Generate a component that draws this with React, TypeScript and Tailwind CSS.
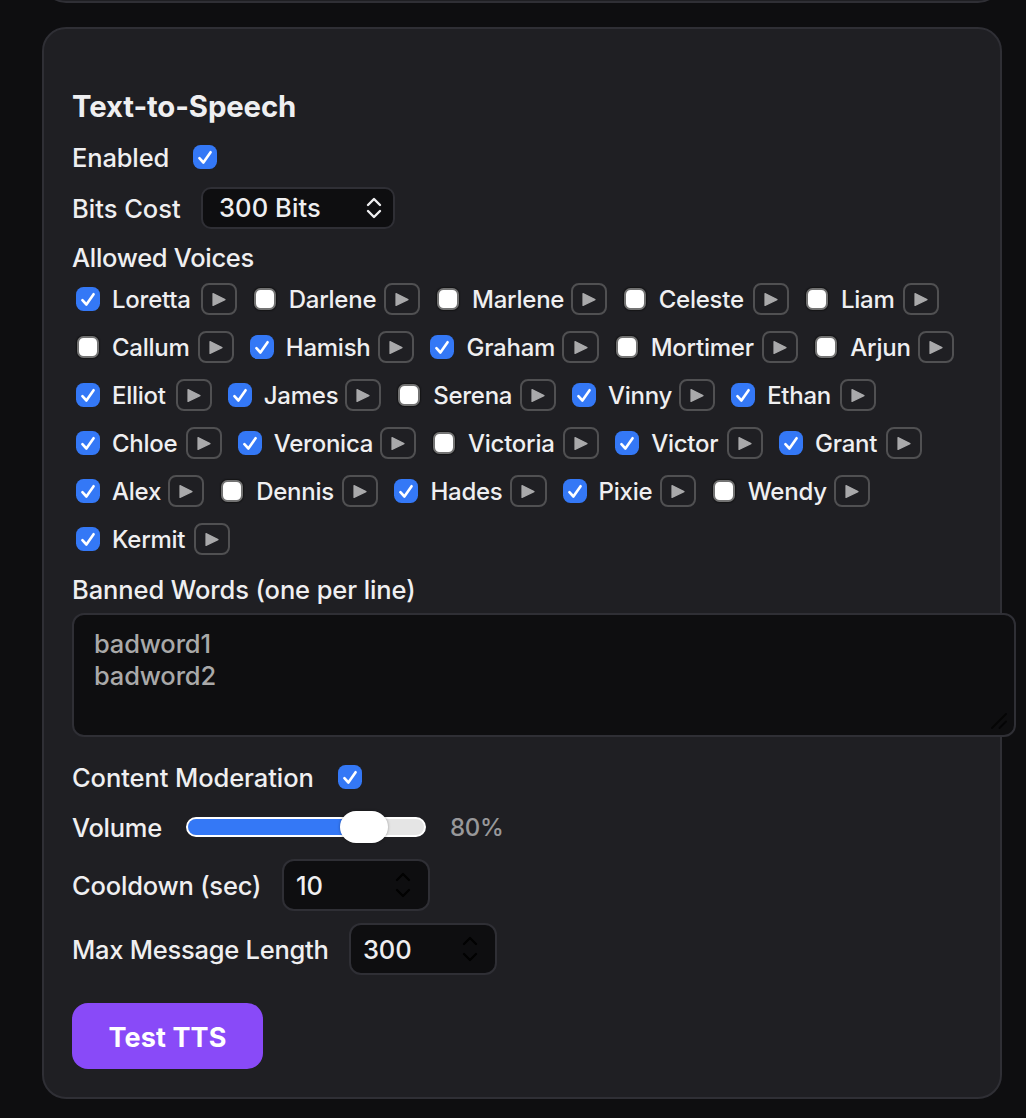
import React, { useState } from "react";
import clsx from "clsx";

interface Voice {
  name: string;
  enabled: boolean;
  width: string;
}

const initialVoices: Voice[] = [
  { name: "Loretta", enabled: true, width: "w-[80.5px]" },
  { name: "Darlene", enabled: false, width: "w-[87.2px]" },
  { name: "Marlene", enabled: false, width: "w-[90.5px]" },
  { name: "Celeste", enabled: false, width: "w-[86px]" },
  { name: "Liam", enabled: false, width: "w-[54px]" },
  { name: "Callum", enabled: false, width: "w-[77.6px]" },
  { name: "Hamish", enabled: true, width: "w-[84.5px]" },
  { name: "Graham", enabled: true, width: "w-[88px]" },
  { name: "Mortimer", enabled: false, width: "w-[103.4px]" },
  { name: "Arjun", enabled: false, width: "w-[59.4px]" },
  { name: "Elliot", enabled: true, width: "w-[55.6px]" },
  { name: "James", enabled: true, width: "w-[73.2px]" },
  { name: "Serena", enabled: false, width: "w-[78.6px]" },
  { name: "Vinny", enabled: true, width: "w-[63px]" },
  { name: "Ethan", enabled: true, width: "w-[65px]" },
  { name: "Chloe", enabled: true, width: "w-[65.6px]" },
  { name: "Veronica", enabled: true, width: "w-[98px]" },
  { name: "Victoria", enabled: false, width: "w-[87px]" },
  { name: "Victor", enabled: true, width: "w-[67.7px]" },
  { name: "Grant", enabled: true, width: "w-[63px]" },
  { name: "Alex", enabled: true, width: "w-[48px]" },
  { name: "Dennis", enabled: false, width: "w-[78px]" },
  { name: "Hades", enabled: true, width: "w-[72px]" },
  { name: "Pixie", enabled: true, width: "w-[53px]" },
  { name: "Wendy", enabled: false, width: "w-[78px]" },
  { name: "Kermit", enabled: true, width: "w-[74px]" },
];

function Checkbox({ checked, onClick }: { checked: boolean; onClick: () => void }) {
  return (
    <button
      type="button"
      role="checkbox"
      aria-checked={checked}
      onClick={onClick}
      className="flex size-6 shrink-0 items-center justify-center"
    >
      {checked ? (
        <span className="flex size-6 items-center justify-center rounded-[7.5px] bg-[#3478f6]">
          <svg viewBox="0 0 24 24" className="size-6" fill="none" stroke="white" strokeWidth="2.6" strokeLinecap="round" strokeLinejoin="round">
            <path d="M6.4 13.2 10.4 17.5 17.6 7.2" />
          </svg>
        </span>
      ) : (
        <span className="size-[22px] rounded-[6.5px] border-2 border-[#737373] bg-white shadow-[0_0_1px_1px_#141416]" />
      )}
    </button>
  );
}

function PlayButton() {
  return (
    <button
      type="button"
      className="ml-2 flex h-8 w-[36.2px] shrink-0 items-center justify-center rounded-[8px] border-2 border-[#505052]"
    >
      <svg viewBox="0 0 14 14" className="size-[14px]" fill="#a9a9ab" stroke="#a9a9ab" strokeWidth="1.2" strokeLinejoin="round">
        <path d="M1 1.6 13 7.6 1 13.4Z" />
      </svg>
    </button>
  );
}

function NumberField({ value }: { value: string }) {
  return (
    <div className="flex h-[52px] w-[148px] items-center justify-between rounded-[12px] border-2 border-[#2f2f35] bg-[#0e0e10] pr-[17px] pl-3">
      <span className="pt-0.5">{value}</span>
      <svg viewBox="0 0 16 28" className="h-7 w-4" fill="none" stroke="#020202" strokeWidth="2.2" strokeLinecap="round" strokeLinejoin="round">
        <path d="M2 9 8 3 14 9M2 19 8 25 14 19" />
      </svg>
    </div>
  );
}

export default function App() {
  const [enabled, setEnabled] = useState(true);
  const [moderation, setModeration] = useState(true);
  const [voices, setVoices] = useState(initialVoices);

  const toggleVoice = (name: string) => {
    setVoices(voices.map((v) => (v.name === name ? { ...v, enabled: !v.enabled } : v)));
  };

  return (
    <div className="h-[1118px] w-[1026px] overflow-hidden bg-[#0e0e10] pl-[42px] font-['Inter',sans-serif] text-[25.5px] leading-8 font-[450] tracking-[-0.15px] whitespace-nowrap text-[#efeff1]">
      {/* Bottom edge of the previous card */}
      <div className="flex h-[3px] w-[960px] items-end overflow-hidden">
        <div className="h-16 w-full shrink-0 rounded-[24px] border-2 border-[#2f2f35] bg-[#1f1f23]" />
      </div>

      <section className="mt-6 h-[1072px] w-[960px] rounded-[24px] border-2 border-[#2f2f35] bg-[#1f1f23] px-7 pt-[57px]">
        <h2 className="h-10 text-[29.3px] leading-[41px] font-bold tracking-[-0.1px]">Text-to-Speech</h2>

        <div className="mt-[15px] flex h-8 items-center">
          <span className="w-[121px] pt-0.5">Enabled</span>
          <Checkbox checked={enabled} onClick={() => setEnabled(!enabled)} />
        </div>

        <div className="mt-[14px] flex h-[42px] items-center">
          <span className="w-[129px] pt-0.5 tracking-normal">Bits Cost</span>
          <div className="flex h-[42px] w-[194px] items-center justify-between rounded-[10px] border-2 border-[#2f2f35] bg-[#0e0e10] pr-[11px] pl-4">
            <span className="tracking-[0.1px]">300 Bits</span>
            <svg viewBox="0 0 16 22" className="h-[22px] w-4" fill="none" stroke="#efeff1" strokeWidth="2.4" strokeLinecap="round" strokeLinejoin="round">
              <path d="M2 8 8 2 14 8M2 14 8 20 14 14" />
            </svg>
          </div>
        </div>

        <div className="mt-[13px] h-8 tracking-[-0.3px]">Allowed Voices</div>

        <div className="mt-[9px] flex flex-wrap gap-x-3 gap-y-4 text-[24px] tracking-[-0.25px]">
          {voices.map((voice) => (
            <div key={voice.name} className="flex h-8 items-center pl-1">
              <Checkbox checked={voice.enabled} onClick={() => toggleVoice(voice.name)} />
              <span className={clsx("ml-3 shrink-0 pt-0.5", voice.width)}>{voice.name}</span>
              <PlayButton />
            </div>
          ))}
        </div>

        <div className="mt-[19px] h-8 tracking-[-0.1px]">Banned Words (one per line)</div>

        <div className="relative mt-[7px] h-[124px] w-[944px] rounded-[12px] border-2 border-[#2f2f35] bg-[#0e0e10] px-5 pt-[13px] text-[#a9a9a9]">
          <div>badword1</div>
          <div>badword2</div>
          <svg viewBox="0 0 16 16" className="absolute right-[7px] bottom-[6px] size-4" fill="none" stroke="#050506" strokeWidth="1.8" strokeLinecap="round">
            <path d="M1 15 15 1M8.5 15 15 8.5" />
          </svg>
        </div>

        <div className="mt-6 flex h-8 items-center">
          <span className="w-[266px] pt-0.5 tracking-[-0.08px]">Content Moderation</span>
          <Checkbox checked={moderation} onClick={() => setModeration(!moderation)} />
        </div>

        <div className="mt-[18px] flex h-8 items-center">
          <span className="w-[114px] pt-0.5 tracking-[-0.25px]">Volume</span>
          <div className="relative flex h-5 w-[240px] overflow-visible rounded-full border-2 border-white bg-[#e5e5e5]">
            <div className="h-full w-[168px] rounded-l-full bg-[#3478f6]" />
            <div className="absolute -top-2 left-[152px] h-8 w-12 rounded-full bg-white shadow-[0_0_3px_rgba(0,0,0,0.35)]" />
          </div>
          <span className="ml-6 pt-0.5 text-[24px] tracking-[-0.3px] text-[#98989a]">80%</span>
        </div>

        <div className="mt-4 flex h-[52px] items-center">
          <span className="w-[210px] pt-0.5 tracking-[-0.2px]">Cooldown (sec)</span>
          <NumberField value="10" />
        </div>

        <div className="mt-3 flex h-[52px] items-center">
          <span className="w-[277px] pt-0.5 tracking-[-0.25px]">Max Message Length</span>
          <NumberField value="300" />
        </div>

        <button
          type="button"
          className="mt-7 flex h-[66px] w-[191px] items-center justify-center rounded-[16px] bg-[#894af8] pt-[3px] text-[27px] font-bold tracking-[0.1px] text-white"
        >
          Test TTS
        </button>
      </section>
    </div>
  );
}
